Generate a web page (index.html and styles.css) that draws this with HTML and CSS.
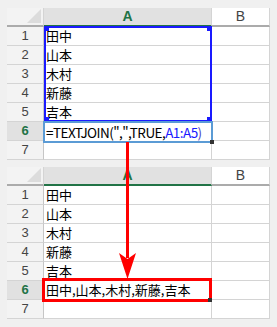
FILE: index.html
```html
<!DOCTYPE html>
<html lang="ja">
<head>
    <meta charset="UTF-8">
    <meta name="viewport" content="width=device-width, initial-scale=1.0">
    <title>TEXTJOIN</title>
    <link rel="stylesheet" href="styles.css">
</head>
<body>
    <div class="sheet">
        <div class="grid">
            <div class="corner"><span class="corner-mark"></span></div>
            <div class="col-head active">A</div>
            <div class="col-head">B</div>

            <div class="row-head">1</div><div class="cell">田中</div><div class="cell"></div>
            <div class="row-head">2</div><div class="cell">山本</div><div class="cell"></div>
            <div class="row-head">3</div><div class="cell">木村</div><div class="cell"></div>
            <div class="row-head">4</div><div class="cell">新藤</div><div class="cell"></div>
            <div class="row-head">5</div><div class="cell">吉本</div><div class="cell"></div>
            <div class="row-head active">6</div><div class="cell"></div><div class="cell"></div>
            <div class="row-head">7</div><div class="cell"></div><div class="cell"></div>

            <div class="range">
                <span class="handle tl"></span>
                <span class="handle tr"></span>
                <span class="handle bl"></span>
                <span class="handle br"></span>
            </div>
            <div class="editor">=TEXTJOIN(",",TRUE,<span class="ref">A1:A5</span><span class="paren">)</span><span class="fill"></span></div>
        </div>

        <div class="grid second">
            <div class="corner"><span class="corner-mark"></span></div>
            <div class="col-head active">A</div>
            <div class="col-head">B</div>

            <div class="row-head">1</div><div class="cell">田中</div><div class="cell"></div>
            <div class="row-head">2</div><div class="cell">山本</div><div class="cell"></div>
            <div class="row-head">3</div><div class="cell">木村</div><div class="cell"></div>
            <div class="row-head">4</div><div class="cell">新藤</div><div class="cell"></div>
            <div class="row-head">5</div><div class="cell">吉本</div><div class="cell"></div>
            <div class="row-head active">6</div><div class="cell">田中,山本,木村,新藤,吉本</div><div class="cell"></div>
            <div class="row-head">7</div><div class="cell"></div><div class="cell"></div>

            <div class="result"><span class="fill"></span></div>
        </div>

        <svg class="arrow" width="277" height="327" viewBox="0 0 277 327">
            <rect x="126" y="142" width="3" height="116" fill="#ff0000"/>
            <polygon points="119,253 127.5,259 136,253 127.5,279" fill="#ff0000"/>
        </svg>
    </div>
</body>
</html>
```

FILE: styles.css
```css
body {
    margin: 0;
    background-color: #f0f0f0;
    font-family: "Liberation Sans", Arial, sans-serif;
}
.sheet {
    position: relative;
    width: 277px;
    height: 327px;
    padding: 8px 0 0 7px;
    box-sizing: border-box;
}
.grid {
    position: relative;
    display: grid;
    grid-template-columns: 37px 168px 58px;
    grid-auto-rows: 19px;
    width: 263px;
    background-color: #fff;
}
.second {
    margin-top: 7px;
}
.grid > div {
    box-sizing: border-box;
    border-right: 1px solid #d4d4d4;
    border-bottom: 1px solid #d4d4d4;
}
.corner {
    position: relative;
    background-color: #f3f3f3;
    border-bottom: 2px solid #ababab !important;
}
.corner-mark {
    position: absolute;
    right: 2px;
    bottom: 2px;
    width: 0;
    height: 0;
    border-left: 14px solid transparent;
    border-bottom: 14px solid #dcdcdc;
}
.col-head {
    background-color: #fff;
    color: #444;
    font-size: 14px;
    text-align: center;
    line-height: 17px;
    border-bottom: 2px solid #ababab !important;
}
.col-head.active {
    background-color: #e1e1e1;
    color: #217346;
    font-weight: bold;
    border-bottom-color: #217346 !important;
}
.row-head {
    background-color: #f3f3f3;
    color: #444;
    font-size: 13px;
    text-align: center;
    line-height: 18px;
    border-right-color: #c6c6c6 !important;
}
.row-head.active {
    background-color: #e1e1e1;
    color: #217346;
    font-weight: bold;
}
.cell {
    font-family: "Noto Sans CJK JP", sans-serif;
    font-size: 13px;
    line-height: 18px;
    color: #000;
    padding-left: 2px;
    white-space: nowrap;
}
.range {
    position: absolute;
    left: 37px;
    top: 18px;
    width: 168px;
    height: 96px;
    border: 2px solid #1a1aff !important;
    box-sizing: border-box;
}
.handle {
    position: absolute;
    width: 4px;
    height: 4px;
    background-color: #1a1aff;
}
.handle.tl { left: -1px; top: -1px; }
.handle.tr { right: -1px; top: -1px; }
.handle.bl { left: -1px; bottom: -1px; }
.handle.br { right: -1px; bottom: -1px; }
.editor {
    position: absolute;
    left: 36px;
    top: 113px;
    width: 170px;
    height: 22px;
    border: 2px solid #5b9bd5 !important;
    box-sizing: border-box;
    background-color: #fff;
    font-family: "Noto Sans CJK JP", sans-serif;
    font-size: 13.5px;
    letter-spacing: -0.55px;
    line-height: 18px;
    padding-left: 1px;
    color: #000;
    white-space: nowrap;
}
.ref {
    color: #1a1aff;
}
.paren {
    color: #4b3fc4;
}
.fill {
    position: absolute;
    right: -3px;
    bottom: -3px;
    width: 4px;
    height: 4px;
    background-color: #333;
}
.result {
    position: absolute;
    left: 35px;
    top: 111px;
    width: 170px;
    height: 24px;
    border: 3px solid #ff0000 !important;
    box-sizing: border-box;
}
.arrow {
    position: absolute;
    left: 0;
    top: 0;
    pointer-events: none;
}
```
